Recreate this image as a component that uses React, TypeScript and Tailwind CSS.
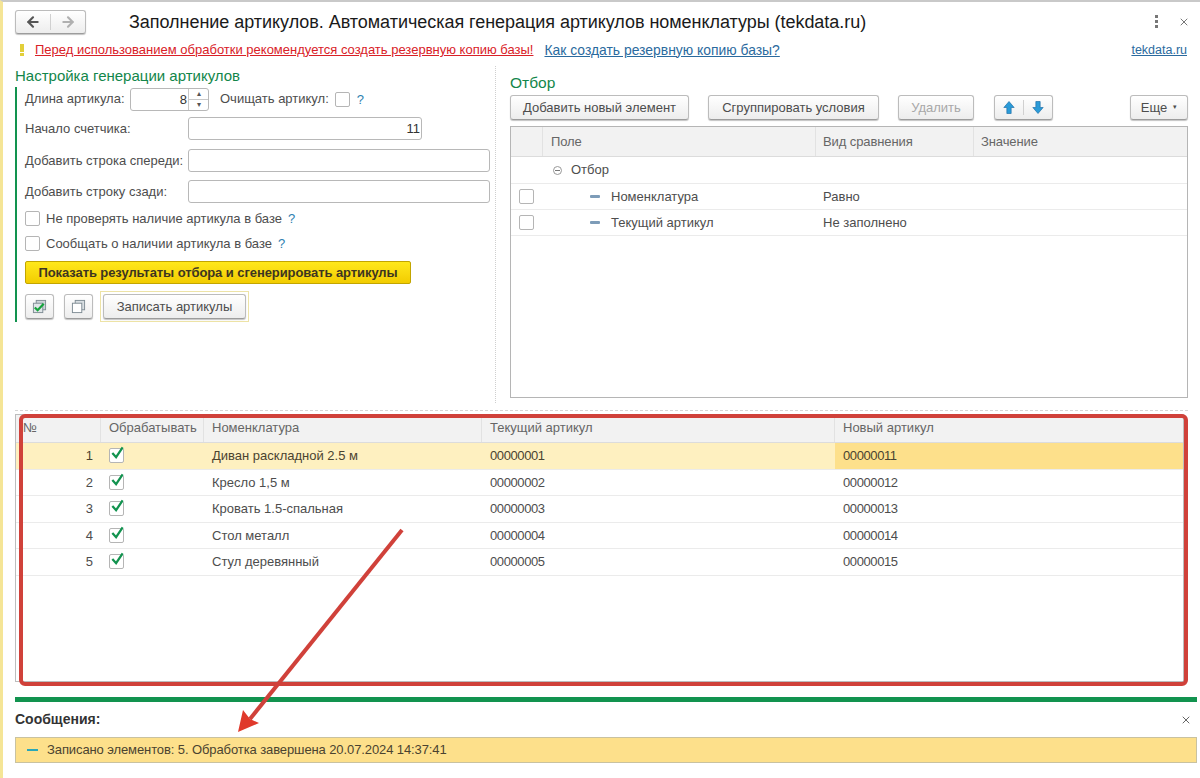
import { ArrowLeft, ArrowRight, X } from "lucide-react";

const btn =
  "h-[25px] flex items-center justify-center rounded-[3px] border border-[#bcbcbc] border-b-[#9c9c9c] bg-gradient-to-b from-white to-[#ededed] shadow-[0_1px_1px_#c4c4c4] text-[13px] text-[#4d4d4d]";

const filterRows = [
  { name: "Номенклатура", cmp: "Равно" },
  { name: "Текущий артикул", cmp: "Не заполнено" },
];

const rows = [
  { n: 1, name: "Диван раскладной 2.5 м", cur: "00000001", next: "00000011" },
  { n: 2, name: "Кресло 1,5 м", cur: "00000002", next: "00000012" },
  { n: 3, name: "Кровать 1.5-спальная", cur: "00000003", next: "00000013" },
  { n: 4, name: "Стол металл", cur: "00000004", next: "00000014" },
  { n: 5, name: "Стул деревянный", cur: "00000005", next: "00000015" },
];

const Check = ({ checked = false }: { checked?: boolean }) => (
  <span className="relative block w-[15px] h-[15px] shrink-0 rounded-[2px] border border-[#b5b5b5] bg-white">
    {checked && (
      <svg viewBox="0 0 16 16" className="absolute left-[0px] top-[-4px] w-[15px] h-[15px]">
        <path d="M2.5 8.5 L6.5 13 L13.5 2.5" fill="none" stroke="#12934f" strokeWidth="2.4" />
      </svg>
    )}
  </span>
);

const Help = () => <span className="text-[13px] text-[#2f7fb0]">?</span>;

const Label = ({ text, w }: { text: string; w: string }) => (
  <span className={`${w} shrink-0 text-[13px] text-[#4d4d4d]`}>{text}</span>
);

const Field = ({ value, w }: { value?: string; w: string }) => (
  <div
    className={`${w} h-[23px] flex items-center justify-end pr-[1px] rounded-[3px] border border-[#b8b8b8] bg-white text-[13px] text-[#333]`}
  >
    {value}
  </div>
);

const ArrowBlock = ({ up }: { up?: boolean }) => (
  <svg viewBox="0 0 14 16" className={`w-[12px] h-[15px] ${up ? "" : "rotate-180"}`}>
    <path d="M7 1 L13 8 H9.5 V15 H4.5 V8 H1 Z" fill="#2a9bd8" stroke="#1d6fa8" strokeWidth="0.8" />
  </svg>
);

export default function App() {
  return (
    <div
      className="relative w-[1200px] h-[778px] overflow-hidden bg-white border-t-2 border-t-[#c9c9c9] border-l-[3px] border-l-[#f5e596] font-['Liberation_Sans',Arial,sans-serif]"
    >
      {/* шапка */}
      <div className="h-[37px] flex items-center pl-[12px] pr-[10px] pt-[2px]">
        <div className={`${btn} w-[71px] !h-[24px]`}>
          <span className="w-[35px] flex justify-center border-r border-[#d0d0d0]">
            <ArrowLeft size={16} strokeWidth={3.2} color="#555" />
          </span>
          <span className="w-[35px] flex justify-center">
            <ArrowRight size={16} strokeWidth={3.2} color="#b0b0b0" />
          </span>
        </div>
        <h1 className="ml-[43px] text-[18px] leading-[24px] text-[#1a1a1a] tracking-[-0.04px]">
          Заполнение артикулов. Автоматическая генерация артикулов номенклатуры (tekdata.ru)
        </h1>
        <div className="ml-auto flex items-center gap-[20px]">
          <span className="flex flex-col gap-[2px]">
            <i className="block w-[3px] h-[3px] bg-[#777]" />
            <i className="block w-[3px] h-[3px] bg-[#777]" />
            <i className="block w-[3px] h-[3px] bg-[#777]" />
          </span>
          <X size={12} color="#777" />
        </div>
      </div>

      {/* предупреждение */}
      <div className="h-[20px] mt-[1px] flex items-center pl-[17px] pr-[13px] text-[13px]">
        <span className="w-[3px] flex flex-col gap-[1px] mr-[12px]">
          <i className="block w-[4px] h-[8px] bg-[#e2cf3a]" />
          <i className="block w-[4px] h-[3px] bg-[#e2cf3a]" />
        </span>
        <span className="text-[#d92127] underline">
          Перед использованием обработки рекомендуется создать резервную копию базы!
        </span>
        <span className="ml-[11px] text-[13.9px] text-[#2a6a9e] underline">Как создать резервную копию базы?</span>
        <span className="ml-auto text-[12.5px] text-[#2a6a9e] underline">tekdata.ru</span>
      </div>

      {/* верхняя часть */}
      <div className="h-[345px] flex pl-[12px]">
        <div className="w-[481px] mt-[6px] mb-[2px] border-r border-dotted border-[#cfcfcf]">
          <h2 className="text-[15px] leading-[20px] text-[#12864a]">Настройка генерации артикулов</h2>
          <div className="mt-[1px] w-[475px] h-[235px] pl-[8px] border-l-[2px] border-[#12934f] flex flex-col">
            <div className="h-[24px] flex items-center">
              <Label text="Длина артикула:" w="w-[105px]" />
              <div className="w-[79px] h-[23px] flex rounded-[3px] border border-[#b8b8b8]">
                <span className="flex-1 text-right pr-[1px] text-[13px] leading-[21px] text-[#333]">8</span>
                <span className="w-[20px] flex flex-col border-l border-[#c8c8c8] text-[8px] leading-[10px] text-center text-[#555]">
                  <span className="h-[11px] border-b border-[#c8c8c8]">▴</span>
                  <span>▾</span>
                </span>
              </div>
              <span className="ml-[11px] text-[13px] text-[#4d4d4d]">Очищать артикул:</span>
              <span className="ml-[6px]"><Check /></span>
              <span className="ml-[7px]"><Help /></span>
            </div>
            <div className="mt-[6px] flex items-center">
              <Label text="Начало счетчика:" w="w-[163px]" />
              <Field value="11" w="w-[234px]" />
            </div>
            <div className="mt-[9px] flex items-center">
              <Label text="Добавить строка спереди:" w="w-[163px]" />
              <Field w="w-[302px]" />
            </div>
            <div className="mt-[8px] flex items-center">
              <Label text="Добавить строку сзади:" w="w-[163px]" />
              <Field w="w-[302px]" />
            </div>
            <div className="mt-[7px] h-[17px] flex items-center gap-[6px]">
              <Check />
              <span className="text-[13px] text-[#4d4d4d]">Не проверять наличие артикула в базе</span>
              <Help />
            </div>
            <div className="mt-[8px] h-[17px] flex items-center gap-[6px]">
              <Check />
              <span className="text-[13px] text-[#4d4d4d]">Сообщать о наличии артикула в базе</span>
              <Help />
            </div>
            <button className="mt-[9px] w-[386px] h-[26px] rounded-[2px] border border-[#c2a500] bg-gradient-to-b from-[#ffe81a] to-[#f2cc00] text-[13px] font-bold text-[#3d3520] tracking-[-0.08px]">
              Показать результаты отбора и сгенерировать артикулы
            </button>
            <div className="mt-[7px] flex items-center">
              <div className={`${btn} w-[29px]`}>
                <svg viewBox="0 0 16 16" className="w-[15px] h-[15px]">
                  <rect x="4.5" y="1.5" width="10" height="10" fill="#cdd4d8" stroke="#7e8b93" />
                  <rect x="1.5" y="4.5" width="10" height="10" fill="#dfe5e8" stroke="#7e8b93" />
                  <path d="M3 9 L6 12 L12.5 5" fill="none" stroke="#14a33c" strokeWidth="2.4" />
                </svg>
              </div>
              <div className={`${btn} w-[29px] ml-[10px]`}>
                <svg viewBox="0 0 16 16" className="w-[15px] h-[15px]">
                  <rect x="4.5" y="1.5" width="10" height="10" fill="#d8dee2" stroke="#7e8b93" />
                  <rect x="1.5" y="4.5" width="10" height="10" fill="#fff" stroke="#7e8b93" />
                </svg>
              </div>
              <div className="ml-[7px] p-[2px] border border-[#ede3a6]">
                <div className={`${btn} w-[143px]`}>Записать артикулы</div>
              </div>
            </div>
          </div>
        </div>

        {/* отбор */}
        <div className="flex-1 pl-[14px] pr-[12px] pt-[13px]">
          <h2 className="text-[15.5px] leading-[20px] text-[#12864a]">Отбор</h2>
          <div className="mt-[2px] flex items-center">
            <div className={`${btn} w-[179px]`}>Добавить новый элемент</div>
            <div className={`${btn} w-[171px] ml-[19px]`}>Сгруппировать условия</div>
            <div className={`${btn} w-[76px] ml-[19px] text-[#a8a8a8]`}>Удалить</div>
            <div className={`${btn} w-[59px] ml-[20px]`}>
              <span className="w-[30px] flex justify-center border-r border-[#d0d0d0]"><ArrowBlock up /></span>
              <span className="w-[29px] flex justify-center"><ArrowBlock /></span>
            </div>
            <div className={`${btn} w-[58px] ml-auto gap-[6px]`}>
              Еще <span className="text-[7px]">▾</span>
            </div>
          </div>
          <div className="mt-[6px] h-[272px] border border-[#b5b5b5]">
            <div className="h-[30px] flex items-center bg-[#f2f2f2] border-b border-[#dcdcdc] text-[13px] text-[#666] tracking-[-0.1px]">
              <span className="w-[32px] h-full border-r border-[#e2e2e2]" />
              <span className="w-[273px] h-full pl-[8px] flex items-center border-r border-[#e2e2e2]">Поле</span>
              <span className="w-[158px] h-full pl-[7px] flex items-center border-r border-[#e2e2e2]">Вид сравнения</span>
              <span className="pl-[7px]">Значение</span>
            </div>
            <div className="h-[27px] flex items-center border-b border-[#ebebeb] pl-[42px] text-[13px] text-[#4d4d4d]">
              <span className="w-[9px] h-[9px] mr-[9px] rounded-full border border-[#999] flex items-center justify-center">
                <i className="block w-[5px] h-[1px] bg-[#777]" />
              </span>
              Отбор
            </div>
            {filterRows.map((r) => (
              <div key={r.name} className="h-[26px] flex items-center border-b border-[#ebebeb] text-[13px] text-[#4d4d4d]">
                <span className="ml-[8px] w-[32px]"><Check /></span>
                <i className="block ml-[39px] w-[10px] h-[3px] rounded-[1px] bg-[#7d9cb8]" />
                <span className="ml-[11px] w-[212px]">{r.name}</span>
                <span>{r.cmp}</span>
              </div>
            ))}
          </div>
        </div>
      </div>

      {/* таблица результатов */}
      <div className="mt-[5px] ml-[12px] mr-[12px] border-t border-dashed border-[#d5d5d5] pt-[3px]">
        <div className="h-[268px] mr-[4px] border border-[#bdbdbd]">
          <div className="h-[28px] flex bg-[#f2f2f2] border-b border-[#dcdcdc] text-[13px] text-[#666]">
            <span className="w-[85px] pl-[7px] pt-[3px] border-r border-[#e2e2e2]">№</span>
            <span className="w-[103px] pl-[8px] pt-[3px] border-r border-[#e2e2e2]">Обрабатывать</span>
            <span className="w-[278px] pl-[8px] pt-[3px] border-r border-[#e2e2e2]">Номенклатура</span>
            <span className="w-[353px] pl-[8px] pt-[3px] border-r border-[#e2e2e2]">Текущий артикул</span>
            <span className="pl-[8px] pt-[3px]">Новый артикул</span>
          </div>
          {rows.map((r) => {
            const active = r.n === 1;
            return (
              <div
                key={r.n}
                className={`h-[26.5px] flex items-center border-b border-[#ebebeb] text-[13px] ${
                  active ? "bg-[#fef0c0] text-[#4a4330]" : "text-[#4d4d4d]"
                }`}
              >
                <span className="w-[85px] pr-[8px] text-right">{r.n}</span>
                <span className="w-[103px] pl-[8px]"><Check checked /></span>
                <span className="w-[278px] pl-[8px]">{r.name}</span>
                <span className="w-[353px] pl-[8px] tracking-[-0.4px]">{r.cur}</span>
                <span className={`flex-1 h-full pl-[8px] flex items-center tracking-[-0.4px] ${active ? "bg-[#fde08b]" : ""}`}>{r.next}</span>
              </div>
            );
          })}
        </div>
      </div>

      {/* сообщения */}
      <div className="mt-[15px] ml-[12px]">
        <div className="h-[5px] w-[1182px] bg-[#12934f]" />
        <div className="h-[35px] w-[1182px] flex items-center justify-between">
          <span className="text-[14px] font-bold text-[#333]">Сообщения:</span>
          <X size={12} color="#666" className="mr-[5px]" />
        </div>
        <div className="h-[26px] w-[1182px] flex items-center pl-[11px] bg-[#fde08b] border border-[#c9c2a0] text-[13px] text-[#4a4330] tracking-[-0.1px]">
          <i className="block w-[11px] h-[2px] mr-[9px] bg-[#2aa7b8]" />
          Записано элементов: 5. Обработка завершена 20.07.2024 14:37:41
        </div>
      </div>

      {/* красная рамка и стрелка поверх экрана */}
      <div className="absolute left-[16px] top-[412px] w-[1169px] h-[272px] rounded-[6px] border-[4px] border-[#d0413a] pointer-events-none" />
      <svg className="absolute left-[-3px] top-[-2px] w-[1200px] h-[778px] pointer-events-none" viewBox="0 0 1200 778">
        <path d="M402 530 L250 719" stroke="#d0413a" strokeWidth="4" fill="none" />
        <path d="M238 732 L243 710 L250 719 L259 723 Z" fill="#e0392b" />
      </svg>
    </div>
  );
}
